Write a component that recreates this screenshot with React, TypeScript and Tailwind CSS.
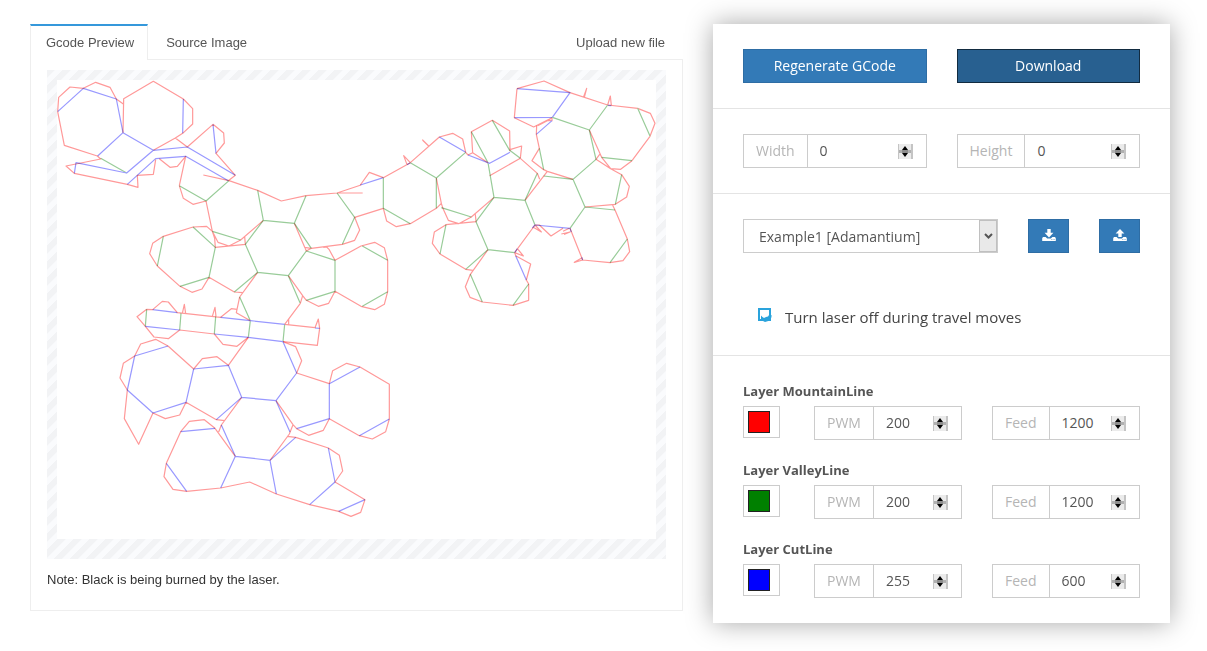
import React, { useState } from "react";

const RED = "#ff9999";
const GREEN = "#99cc99";
const BLUE = "#9999ff";

type Patch = { at: string; red: string; green: string; blue: string };

// Each patch of the unfolded net has its own origin and a 3:1 unit grid.
const PATCHES: Patch[] = [
  {
    at: "translate(20 15) scale(0.33333)",
    green: "M242 430 L320 474",
    blue: "M113 290 L190 220 L289 252 L309 353 L233 423 M309 353 L400 406 L320 474 L168 443 L163 475 M400 406 L502 396 L646 481 M322 508 L407 431 L497 424 L625 497 M490 252 L488 355 M579 328 L588 415",
    red: "M113 290 L116 247 L150 216 L190 220 L227 202 L270 217 L289 252 L310 267 M309 353 L311 251 L400 199 L490 252 L518 281 L518 327 L488 355 L466 369 L400 406 M113 290 L133 391 L232 423 L242 432 L138 453 L163 475 L322 508 L354 517 L352 481 L400 478 L407 434 M418 431 L450 457 L472 454 L497 424 L478 512 M466 369 L502 396 L579 328 L611 354 L613 384 L588 415 L646 481 L625 497",
  },
  {
    at: "translate(340 15) scale(0.33333)",
    green: "",
    blue: "M531 221 L690 233 L637 307 L523 308 M803 271 L814 272",
    red: "M531 221 L523 308 L581 336 L636 308 L636 317 L622 317 L634 310 M531 221 L612 198 L690 233 L803 270 L893 280 L931 295 L945 325 L930 364 L876 437 M731 245 L740 220 L733 247 M803 270 L811 243 L814 271 M593 332 L622 317",
  },
  {
    at: "translate(100 170) scale(0.33333)",
    green:
      "M238 47 L318 93 L387 32 M473 61 L490 151 L583 160 L618 77 M490 151 L436 223 L473 307 L565 317 L619 243 L705 271 L705 364 L619 391 M337 184 L422 210 M279 171 L346 232 L327 322 L240 349 M190 199 L172 288 M473 307 L403 366 M583 160 L634 235 M711 69 L764 142 L727 223 M787 228 L863 271 M863 365 L787 409 M565 317 L600 398 M419 381 L451 452 L445 502 M554 463 L549 515 M140 418 L136 469 M243 430 L239 480 M347 440 L343 492",
    blue: "M158 419 L232 428 M362 442 L451 452 L554 463 M136 469 L239 480 M343 492 L445 502 L549 515 M645 474 L659 475",
    red: "M238 47 L250 85 L279 103 L318 93 L337 184 M310 15 L387 32 L473 61 L544 93 L618 77 L711 69 L788 69 M711 69 L783 45 M337 184 L354 217 L387 228 L422 210 L490 151 M337 184 L320 169 L279 171 L190 199 L158 220 L149 251 L172 288 L240 349 L276 367 L306 357 L327 322 L403 366 L428 368 M337 184 L344 205 L346 232 L436 223 L434 200 M473 307 L419 381 L409 428 L451 452 M583 160 L619 243 L634 235 M613 232 L634 235 L727 223 L764 211 L779 180 L764 142 M670 232 L680 231 L687 238 L705 271 L783 228 L824 217 L853 233 L863 271 L863 365 L853 403 L824 419 L783 409 L705 364 L686 400 L655 409 L619 391 L608 377 L601 400 L554 463 M565 317 L608 377 M566 464 L566 448 M140 418 L111 440 L136 469 L162 501 L205 506 L239 480 L343 492 L369 523 L411 529 L445 502 M140 418 L158 419 L187 394 L205 396 L232 428 L362 442 L394 416 L411 418 L409 428 M247 430 L253 403 L257 431 M337 439 L345 412 L348 440 M554 463 L645 473 L655 447 L659 475 L652 526 L549 515",
  },
  {
    at: "translate(340 100) scale(0.33333)",
    green:
      "M130 233 L130 325 L211 371 M211 188 L289 234 L377 157 M289 234 L289 325 M304 323 L394 351 M394 95 L444 188 L462 292 L408 365 L444 449 L524 458 M462 292 L555 301 L585 375 M457 61 L509 151 L541 175 M555 301 L592 220 M611 228 L699 238 L768 178 L748 90 L637 52 M598 145 L611 209 M699 238 L735 321 L690 385 M735 321 L825 330 M748 90 L803 15 M893 25 L930 108 M785 172 L876 182 M845 224 L826 313 M862 417 L810 488 M318 374 L300 462 M377 508 L444 449 M391 523 L427 606 M519 616 L566 552",
    blue: "M61 255 L130 233 M298 111 L377 157 M384 165 L449 190 L510 157 M201 194 L211 188 M577 384 L585 375 L690 385 L694 396 M524 458 L532 446 M527 467 L559 540 M725 472 L728 480 M589 103 L636 62",
    red: "M61 255 L88 217 L130 233 L211 188 L191 167 L201 194 M211 188 L298 111 L338 100 L368 117 L377 157 L384 165 L398 158 L444 188 M247 119 L266 138 L248 121 M398 158 L394 95 L457 61 L509 93 L510 154 M510 149 L545 138 L541 175 L592 220 L599 238 M541 175 L449 227 M555 301 L622 214 L699 238 M211 371 L289 325 L304 310 M289 234 L304 310 L308 323 L325 361 L356 371 L394 351 L462 292 M44 352 L130 325 L140 363 L169 380 L211 371 M406 343 L408 365 L318 374 L283 396 L277 430 L300 462 L377 508 L399 511 M444 449 L391 523 L376 560 L390 592 L427 606 L519 616 L566 601 L566 552 L559 540 L572 492 L527 467 L524 458 L550 468 L534 448 M524 458 L585 375 L598 375 L633 408 L669 385 M585 375 L604 396 L580 382 M669 394 L688 385 M664 402 L690 396 L672 403 M690 385 L728 480 M725 474 L703 487 L728 480 L810 488 L849 482 L869 455 L862 417 L825 330 L818 316 M735 321 L826 313 L860 291 L868 259 L845 224 L812 206 L768 178 L779 163 M748 90 L785 172 L812 206 L842 208 L876 182 M622 214 L611 209 L576 182 L598 145 L589 103 L590 77",
  },
  {
    at: "translate(100 300) scale(0.33333)",
    green: "",
    blue: "M549 125 L590 219 L528 302 L425 292 L385 196 L281 207 L258 307 L159 339 L82 270 L104 168 L204 138 M349 359 L425 292 M364 375 L406 469 L362 564 M406 469 L510 481 L529 582 M510 481 L587 412 M528 302 L570 396 M590 386 L688 356 L688 251 L780 201 M868 357 L778 407 M242 395 L345 385 M199 490 L260 574 M685 444 L705 546 L629 614 M716 634 L795 599",
    red: "M445 112 L385 196 L351 170 L307 176 L281 207 L204 138 L167 118 L122 132 L104 168 L70 190 L60 234 L82 270 L73 356 L116 433 L159 339 L196 356 L239 345 L258 307 L349 359 L374 362 M425 292 L364 375 L356 396 M549 125 L587 140 L605 182 L590 219 L688 251 L698 212 L740 190 L780 201 L868 253 L868 357 L857 395 L817 417 L778 407 L688 356 L670 391 L626 406 L590 386 L579 374 L568 402 L510 481 M528 302 L579 374 M562 409 L587 412 L685 444 L718 466 L728 513 L705 546 L795 599 L782 637 L753 649 L716 634 L629 614 L529 582 L449 546 L362 564 L260 574 L219 568 L192 530 L199 490 L242 395 L268 364 L313 359 L345 385 L406 469",
  },
];

function GcodeDrawing() {
  return (
    <svg
      viewBox="57 80 599 459"
      className="block h-auto w-full bg-white"
      role="img"
      aria-label="Gcode preview"
      fill="none"
      strokeWidth="3.6"
      strokeLinejoin="round"
    >
      {PATCHES.map((p) => (
        <g key={p.at} transform={p.at}>
          <path d={p.green} stroke={GREEN} />
          <path d={p.blue} stroke={BLUE} />
          <path d={p.red} stroke={RED} className="mix-blend-multiply" />
        </g>
      ))}
    </svg>
  );
}

function Spinner({ onStep, name }: { onStep: (by: number) => void; name: string }) {
  return (
    <span className="mr-[13px] flex h-[15px] w-[15px] shrink-0 flex-col self-center border-r-2 border-l border-[#c4c4c4] bg-[#ebebeb]">
      <button type="button" aria-label={`Increase ${name}`} onClick={() => onStep(1)} className="flex h-1.5 items-end justify-center">
        <svg viewBox="0 0 6 4" className="h-1 w-1.5"><path d="M3 0 L6 4 H0Z" /></svg>
      </button>
      <span className="flex h-[3px] justify-center bg-[#b0b0b0]">
        <span className="w-1.5 bg-[#8c8c8c]" />
      </span>
      <button type="button" aria-label={`Decrease ${name}`} onClick={() => onStep(-1)} className="flex h-1.5 items-start justify-center">
        <svg viewBox="0 0 6 4" className="h-1 w-1.5"><path d="M3 4 L6 0 H0Z" /></svg>
      </button>
    </span>
  );
}

function NumberField({ id, label, initial }: { id: string; label: string; initial: number }) {
  const [value, setValue] = useState(initial);
  return (
    <div className="flex h-[34px] min-w-0 border border-[#ccc] bg-white text-sm">
      <label htmlFor={id} className="flex shrink-0 items-center border-r border-[#ccc] px-3 text-[#b5b5b5]">
        {label}
      </label>
      <input
        id={id}
        type="number"
        value={value}
        onChange={(e) => setValue(Number(e.target.value))}
        className="w-0 min-w-0 flex-1 bg-transparent pl-3 text-[#555] outline-none [appearance:textfield] [&::-webkit-inner-spin-button]:appearance-none"
      />
      <Spinner name={id} onStep={(by) => setValue(value + by)} />
    </div>
  );
}

const LAYERS = [
  { name: "MountainLine", swatch: "bg-[#ff0000]", pwm: 200, feed: 1200 },
  { name: "ValleyLine", swatch: "bg-[#008000]", pwm: 200, feed: 1200 },
  { name: "CutLine", swatch: "bg-[#0000ff]", pwm: 255, feed: 600 },
];

function TransferIcon({ up }: { up?: boolean }) {
  return (
    <svg viewBox="0 1 14 14" className="h-3.5 w-3.5" fill="currentColor" aria-hidden="true">
      <path d={up ? "M7 1 L11.4 5.6 H8.7 V9 H5.3 V5.6 H2.6Z" : "M5.3 1 H8.7 V4.8 H11.4 L7 9.4 L2.6 4.8 H5.3Z"} />
      <path
        fillRule="evenodd"
        d="M1 9 H3.6 L5.2 10.4 H8.8 L10.4 9 H13 L13.8 10.3 V13 H.2 V10.3Z M9.4 11.2 V12.1 H10.3 V11.2Z M11.6 11.2 V12.1 H12.5 V11.2Z"
      />
    </svg>
  );
}

export default function App() {
  const [laserOff, setLaserOff] = useState(true);
  return (
    <main className="grid grid-cols-[653fr_457fr] items-start gap-[30px] bg-white pt-6 pr-[37px] pb-7 pl-[30px] font-['Open_Sans',sans-serif] text-[#555]">
      <section className="font-['Liberation_Sans',Arial,sans-serif] text-[13px]">
        <nav className="flex h-9 items-stretch">
          <a href="#preview" className="flex items-center border-x border-t-2 border-x-[#eee] border-t-[#3598db] pr-[13px] pl-[15px]">
            Gcode Preview
          </a>
          <div className="flex flex-1 items-center justify-between border-b border-[#eee] px-[18px] pt-0.5">
            <a href="#source">Source Image</a>
            <a href="#upload">Upload new file</a>
          </div>
        </nav>
        <div className="border-x border-b border-[#eee] px-4 pt-2.5 pb-5">
          <div className="bg-[repeating-linear-gradient(135deg,#f2f3f5_0_5px,#fafbfd_6px_10.6px,#f2f3f5_11.314px)] px-2.5 pt-2.5 pb-5">
            <GcodeDrawing />
          </div>
          <p className="pt-[11px] leading-5 text-[#333]">Note: Black is being burned by the laser.</p>
        </div>
      </section>

      <form className="bg-white shadow-[0_0_25px_rgba(0,0,0,0.35)]" onSubmit={(e) => e.preventDefault()}>
        <div className="grid grid-cols-2 gap-[30px] border-b border-[#e4e4e4] px-[30px] py-[25px] text-sm text-white">
          <button type="button" className="h-[34px] border border-[#2e6da4] bg-[#337ab7]">Regenerate GCode</button>
          <button type="submit" className="h-[34px] border border-[#122b40] bg-[#286090]">Download</button>
        </div>

        <div className="grid grid-cols-2 gap-[30px] border-b border-[#e4e4e4] px-[30px] py-[25px]">
          <NumberField id="width" label="Width" initial={0} />
          <NumberField id="height" label="Height" initial={0} />
        </div>

        <div className="border-b border-[#e4e4e4] px-[30px] py-[25px]">
          <div className="grid grid-cols-[1fr_41px_41px] gap-[30px]">
            <div className="relative">
              <select aria-label="Preset" className="h-[34px] w-full appearance-none border border-[#ccc] bg-white pt-0.5 pl-[15px] text-sm text-[#555] outline-none">
                <option>Example1 [Adamantium]</option>
              </select>
              <span className="pointer-events-none absolute top-px right-px flex h-8 w-[18px] items-center justify-center border border-[#c0c0c0] bg-[#e9e9e9]">
                <svg viewBox="0 0 9 6" className="h-1.5 w-[9px]" fill="none" stroke="#555" strokeWidth="2"><path d="M1 1 L4.5 4.5 L8 1" /></svg>
              </span>
            </div>
            <button type="button" aria-label="Save preset" className="flex h-[34px] items-center justify-center border border-[#2e6da4] bg-[#337ab7] text-white">
              <TransferIcon />
            </button>
            <button type="button" aria-label="Load preset" className="flex h-[34px] items-center justify-center border border-[#2e6da4] bg-[#337ab7] text-white">
              <TransferIcon up />
            </button>
          </div>
          <label className="mt-[54px] flex h-[23px] items-start gap-3.5 pl-[15px] text-[15px] leading-5 text-[#444]">
            <span className="relative mt-px h-[13px] w-[13px]">
              <input
                type="checkbox"
                checked={laserOff}
                onChange={(e) => setLaserOff(e.target.checked)}
                className="block h-[13px] w-[13px] appearance-none border-2 border-[#2aa3dc] bg-white"
              />
              {laserOff && (
                <svg viewBox="0 0 14 14" className="pointer-events-none absolute top-0 left-0 h-3.5 w-3.5" fill="#2aa3dc">
                  <path d="M3 7.5 L4.5 9 L6 10 L8 9 L10 8.5 L11 7 L13.5 7 V9 L12 12.5 L7 14 L3 12Z" />
                </svg>
              )}
            </span>
            <span>Turn laser off during travel moves</span>
          </label>
        </div>

        <div className="flex flex-col gap-5 px-[30px] py-[25px]">
          {LAYERS.map((l) => (
            <fieldset key={l.name}>
              <legend className="mb-[5px] text-[13px] leading-5 font-bold">Layer {l.name}</legend>
              <div className="grid grid-cols-[41px_1fr_1fr] gap-[30px]">
                <button type="button" aria-label={`${l.name} colour`} className="h-8 w-[37px] border border-[#ccc] p-1">
                  <span className={`block h-[22px] w-[22px] border border-[#222] ${l.swatch}`} />
                </button>
                <NumberField id={`${l.name}-pwm`} label="PWM" initial={l.pwm} />
                <NumberField id={`${l.name}-feed`} label="Feed" initial={l.feed} />
              </div>
            </fieldset>
          ))}
        </div>
      </form>
    </main>
  );
}
